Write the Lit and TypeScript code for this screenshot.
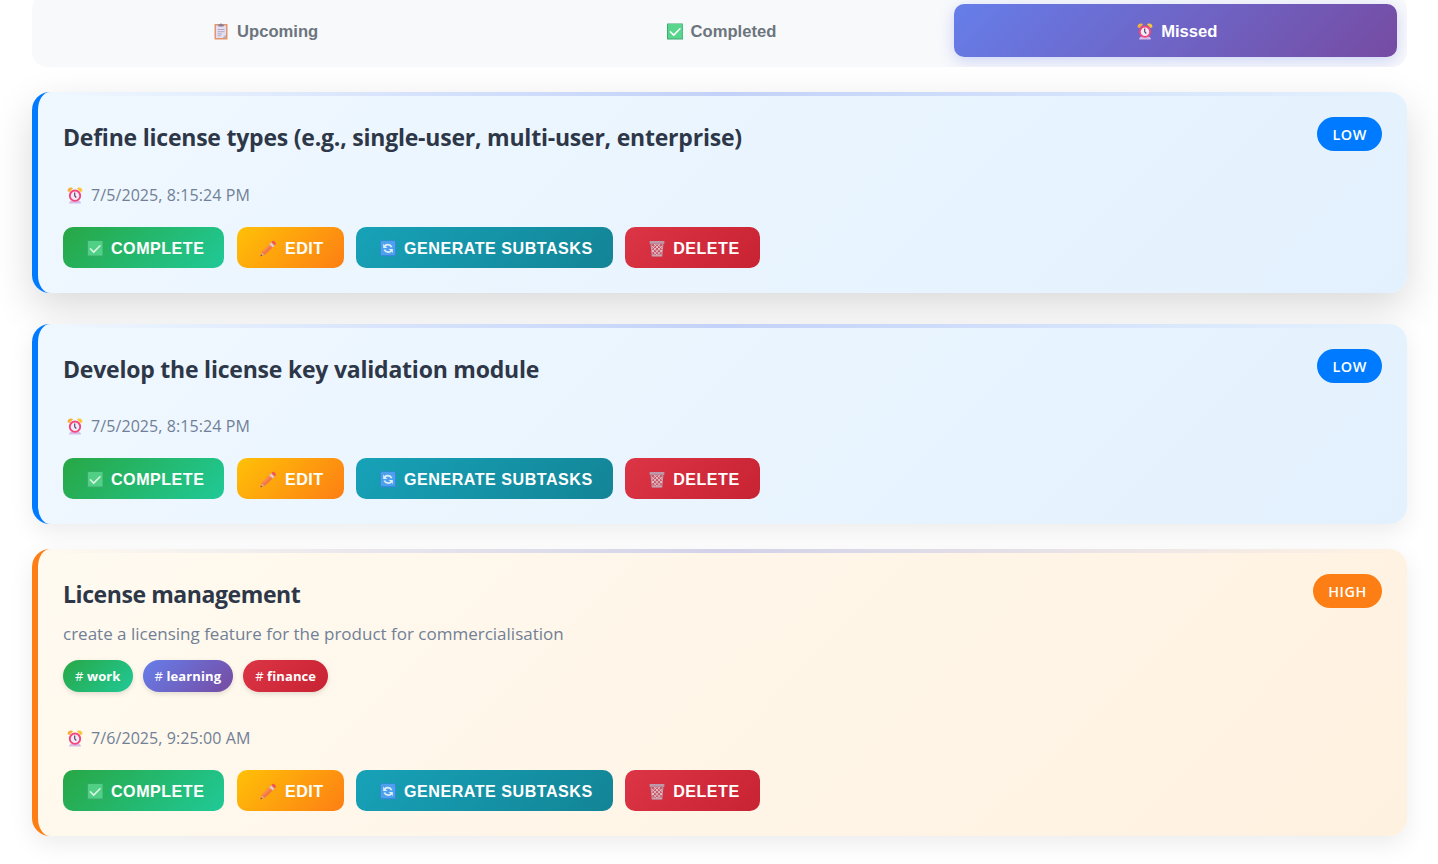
import { LitElement, html, css, svg } from "lit";
import { customElement, property } from "lit/decorators.js";

const clipboard = svg`<rect x="1.5" y="1" width="13" height="15.5" rx=".6" fill="#e2966b"/><path d="M3 2.5h10v9.8L9.8 15H3z" fill="#e4def0"/><path d="M13 11.5V15H9.8z" fill="#b9aecb"/><path d="M5.3 3.6V1.4h1.4c.3-1.1 2.3-1.1 2.6 0h1.4v2.2z" fill="#877c94"/><path d="M4.7 6.5h6.8M4.7 8.7h6.8M4.7 10.8h4.2M4.7 12.7h3.2" stroke="#a79cb7" stroke-width=".8"/>`;
const check = svg`<rect x="0" y=".5" width="16" height="16" rx=".6" fill="#3fa873"/><rect x="1" y="1" width="14.5" height="14.5" rx=".6" fill="#59d68d"/><path d="m3.4 8.8 3.3 3.3 6.3-6.4" fill="none" stroke="#fff" stroke-width="1.5" stroke-linecap="round" stroke-linejoin="round"/>`;
const clock = svg`<path d="M.6 4.2C.4 1.7 2 .2 4.9.6L6 1.6 2.4 5z" fill="#f6b13c"/><path d="M15.4 4.2C15.6 1.7 14 .2 11.1.6L10 1.6 13.6 5z" fill="#f9c73b"/><path d="M2.2 15.2 4 13.5h8l1.8 1.7v1.3H2.2z" fill="#d7bce8"/><circle cx="8" cy="8.7" r="5.2" fill="#f0ebf6" stroke="#f4467a" stroke-width="1.9"/><path d="M7.7 5.5v3.3l1.6 1.7" fill="none" stroke="#5f4270" stroke-width="1.2"/>`;
const pencil = svg`<path d="m.5 16.3 1.2-4.2L11 2.5l3.3 3.4-9.4 9.2z" fill="#f2704f"/><path d="m2.8 11 8.2-8.5 1.2 1.2-8.3 8.4z" fill="#fb8b62"/><path d="m.5 16.3 1.2-4.2 3.2 3z" fill="#dca585"/><path d="m.5 16.3.5-1.8 1.3 1.3z" fill="#4b3448"/><path d="m9.3 4.3 2-2 3.4 3.3-2.1 2z" fill="#d9d3e6"/><path d="M11.3 2.3 12.7.9c.9-.7 3.9 2 3.1 3.1l-1.2 1.5z" fill="#ee4667"/>`;
const cycle = svg`<rect x=".3" y=".6" width="15.6" height="15.6" rx="1" fill="#3f86e6"/><rect x="1" y="1" width="14" height="14" rx="1" fill="#5aa2f8"/><path d="M4.2 6.6C6 3.9 10 4 11.7 7.2M11.8 10.2c-1.8 2.7-5.8 2.6-7.5-.6" fill="none" stroke="#fff" stroke-width="1.7"/><path d="M3.2 3.8v4.1h4.1zM12.8 13V8.9H8.7z" fill="#fff"/>`;
const trash = svg`<path d="M2.1 3.5 3.3 16h9.4l1.2-12.5" fill="#b9a1ad" fill-opacity=".45" stroke="#b5abbc" stroke-width="1.2"/><path d="m3 6 8.5 9M3 10l5.5 5.5M5 4l8 8M8.5 4l4.8 5M13 6l-8.5 9M13 10l-5 5.5M11 4l-8 8M7.5 4 3 8.8" stroke="#e4dfea" stroke-width=".9"/><rect x=".6" y="1" width="14.8" height="2.7" rx=".5" fill="#b8adbd"/><path d="M3.2 15.6h9.6" stroke="#c4bbca" stroke-width="1.2"/>`;
const glyphs: Record<string, unknown> = { clipboard, check, clock, pencil, cycle, trash };
const icon = (name: string) => html`<svg class="icon" viewBox="0 0 16 17" width="16" height="17">${glyphs[name]}</svg>`;

interface Task { title: string; description?: string; tags?: string[]; due: string; priority: string; raised?: boolean; }

@customElement("task-card")
export class TaskCard extends LitElement {
  @property({ attribute: false }) task!: Task;
  static styles = css`
    :host { display: block; }
    * { box-sizing: border-box; }
    .card { position: relative; overflow: hidden; border-left: 6px solid #007bff; border-radius: 18px; padding: 25px;
      background: linear-gradient(135deg, #f0f8ff, #e3f1fe); box-shadow: 0 8px 25px rgba(0,0,0,.08); font-family: "Open Sans", "Noto Sans", sans-serif; }
    .card.high { border-color: #fd7e14; background: linear-gradient(135deg, #fffaf0, #fff1e0); }
    .card.raised { box-shadow: 0 15px 40px rgba(0,0,0,.15); }
    .strip { position: absolute; top: 0; left: 0; right: 0; height: 4px; opacity: .3; background: linear-gradient(90deg, transparent, #667eea, transparent); }
    .head { display: flex; justify-content: space-between; align-items: flex-start; height: 43px; }
    .title { margin: 0; padding-top: 4px; font-size: 23px; line-height: 32px; font-weight: 700; letter-spacing: -.22px; color: #2d3748; white-space: nowrap; }
    .high .title { letter-spacing: -.42px; }
    .badge { height: 34px; padding: 0 15px; border-radius: 17px; background: #007bff; color: #fff; font-size: 14.4px; line-height: 35px; font-weight: 600; letter-spacing: .6px; }
    .high .badge { background: #fd7e14; }
    .description { height: 32px; line-height: 34px; font-size: 17px; color: #718096; }
    .tags { display: flex; gap: 10px; height: 55px; padding-top: 11px; }
    .tag { height: 32px; padding: 0 12px; border-radius: 16px; color: #fff; font-size: 13px; line-height: 32px; font-weight: 700; letter-spacing: .1px; box-shadow: 0 2px 5px rgba(0,0,0,.12); }
    .tag span { font-weight: 400; }
    .work { background: linear-gradient(135deg, #28a745, #20c997); }
    .learning { background: linear-gradient(135deg, #667eea, #764ba2); }
    .finance { background: linear-gradient(135deg, #dc3545, #c82333); }
    .due { display: flex; align-items: center; gap: 8px; height: 24px; margin: 22px 0 20px; padding-left: 4px; font-size: 16px; letter-spacing: .09px; color: #718096; }
    .raised .due { margin-top: 23px; }
    .actions { display: flex; gap: 12.5px; height: 41px; }
    button { display: flex; align-items: center; gap: 8.5px; border: 0; border-radius: 10px; padding: 2px 20px 0 23.5px; color: #fff; font: 700 16.1px "Liberation Sans", Arial, sans-serif; letter-spacing: .5px; white-space: nowrap; }
    .complete { background: linear-gradient(135deg, #28a745, #20c997); }
    .edit { background: linear-gradient(135deg, #ffc107, #fd7e14); }
    .generate { background: linear-gradient(135deg, #17a2b8, #138496); }
    .delete { background: linear-gradient(135deg, #dc3545, #c82333); }
    button .icon { opacity: .85; }
    .icon { flex: none; }
  `;
  render() {
    const t = this.task;
    return html`<article class="card ${t.priority.toLowerCase()} ${t.raised ? "raised" : ""}">
      <div class="strip"></div>
      <div class="head"><h3 class="title">${t.title}</h3><div class="badge">${t.priority}</div></div>
      ${t.description ? html`<div class="description">${t.description}</div>` : ""}
      ${t.tags ? html`<div class="tags">${t.tags.map(x => html`<div class="tag ${x}"><span>#</span> ${x}</div>`)}</div>` : ""}
      <div class="due">${icon("clock")}<span>${t.due}</span></div>
      <div class="actions">
        <button class="complete">${icon("check")}COMPLETE</button>
        <button class="edit">${icon("pencil")}EDIT</button>
        <button class="generate">${icon("cycle")}GENERATE SUBTASKS</button>
        <button class="delete">${icon("trash")}DELETE</button>
      </div>
    </article>`;
  }
}

const tasks: Task[] = [
  { title: "Define license types (e.g., single-user, multi-user, enterprise)", due: "7/5/2025, 8:15:24 PM", priority: "LOW", raised: true },
  { title: "Develop the license key validation module", due: "7/5/2025, 8:15:24 PM", priority: "LOW" },
  { title: "License management", description: "create a licensing feature for the product for commercialisation", tags: ["work", "learning", "finance"], due: "7/6/2025, 9:25:00 AM", priority: "HIGH" },
];

@customElement("app-root")
export class AppRoot extends LitElement {
  static styles = css`
    :host { display: block; height: 864px; overflow: hidden; padding: 0 31px 0 32px; box-sizing: border-box; background: #fff; }
    * { box-sizing: border-box; }
    .tabs { display: grid; grid-template-columns: repeat(3, 1fr); gap: 12.5px; height: 73px; margin-top: -6px; padding: 10px; border-radius: 15px; background: #f8f9fb; overflow: hidden; }
    .tab { display: flex; align-items: center; justify-content: center; gap: 8px; padding: 2px 0 0 4px; border-radius: 10px; color: #6c757d; font: 700 16.6px "Liberation Sans", Arial, sans-serif; }
    .tab.active { color: #fff; background: linear-gradient(135deg, #667eea, #764ba2); box-shadow: 0 4px 15px rgba(102,126,234,.3); }
    .list { display: flex; flex-direction: column; gap: 25px; margin-top: 25px; }
    task-card:first-child { margin-bottom: 6px; }
  `;
  render() {
    return html`<nav class="tabs">
        <div class="tab">${icon("clipboard")}Upcoming</div>
        <div class="tab">${icon("check")}Completed</div>
        <div class="tab active">${icon("clock")}Missed</div>
      </nav>
      <main class="list">${tasks.map(t => html`<task-card .task=${t}></task-card>`)}</main>`;
  }
}
